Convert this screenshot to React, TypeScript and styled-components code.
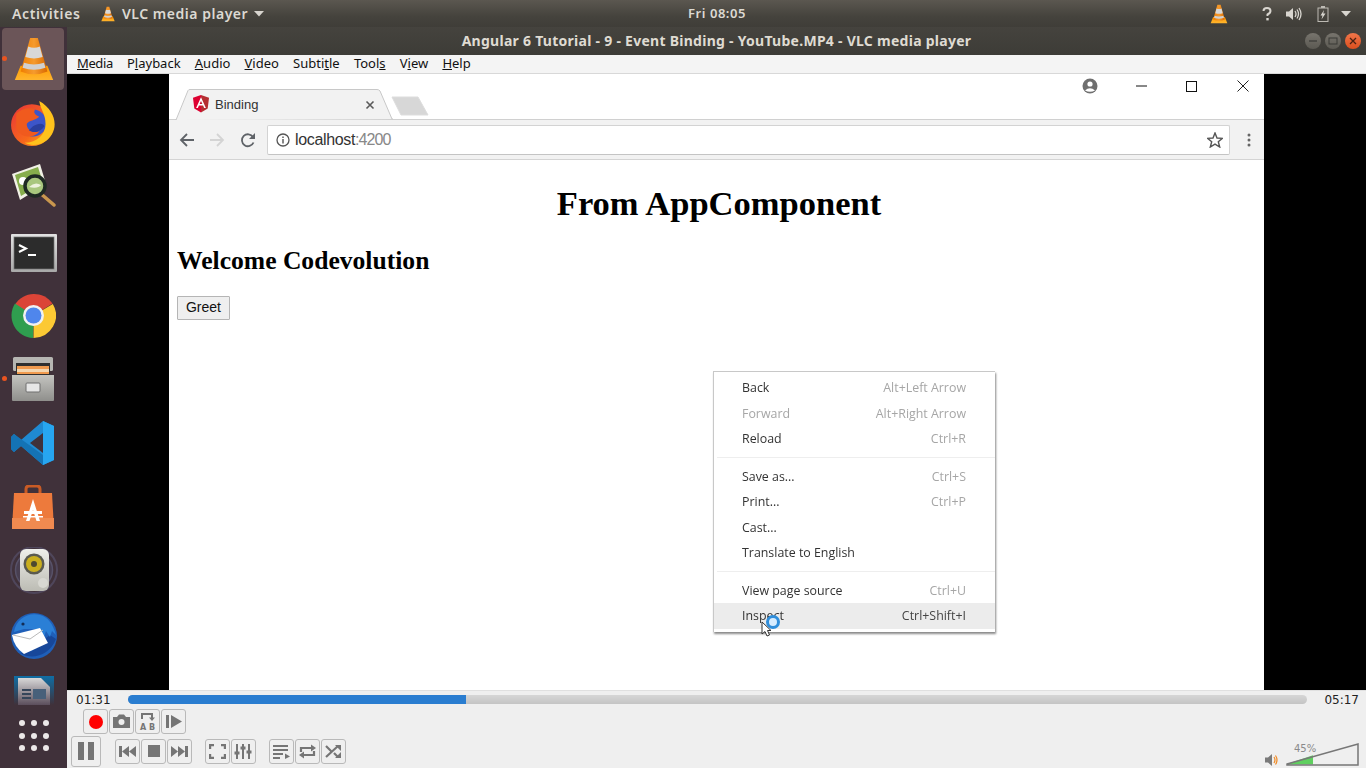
import React from "react";
import styled, { createGlobalStyle } from "styled-components";

const Global = createGlobalStyle`
  html, body { margin: 0; padding: 0; background: #000; }
  body { width: 1366px; height: 768px; overflow: hidden; }
`;

const Screen = styled.div`
  width: 1366px; height: 768px; display: flex; flex-direction: column; overflow: hidden;
  font-family: "Noto Sans", sans-serif;
`;
const TopBar = styled.header`
  height: 27px; flex: none; display: flex; align-items: center; position: relative;
  background: linear-gradient(#5b5750, #45433d 60%, #3f3d38);
  color: #dcd9d2; font-size: 14px; font-weight: 600; letter-spacing: .6px;
`;
const Activities = styled.span` margin-left: 12px; width: 88px; `;
const AppMenu = styled.span` display: flex; align-items: center; gap: 6px; letter-spacing: .52px; `;
const Clock = styled.span`
  position: absolute; left: 688px; top: 4px; font-size: 13px; line-height: 18px; letter-spacing: .55px;
`;
const Tray = styled.div` margin-left: auto; display: flex; align-items: center; padding-right: 15px; `;
const Body = styled.div` flex: 1; display: flex; min-height: 0; `;
const Dock = styled.nav`
  width: 67px; flex: none; display: flex; flex-direction: column; overflow: hidden;
  background: #40313a;
`;
const DockItem = styled.div<{ $active?: boolean; $running?: boolean; $clip?: boolean }>`
  height: ${p => (p.$clip ? 38 : 64)}px; flex: none; display: flex; justify-content: center; position: relative; overflow: hidden;
  align-items: ${p => (p.$clip ? "flex-end" : "center")};
  &::before {
    content: ""; position: absolute; left: 2px; top: 1px; width: 62px; height: 62px; border-radius: 4px;
    background: ${p => (p.$active ? "#6b5558" : "transparent")};
  }
  &::after {
    content: ""; position: absolute; left: 2px; top: 29px; width: 5px; height: 5px; border-radius: 50%;
    background: ${p => (p.$running ? "#e95420" : "transparent")};
  }
  svg { position: relative; }
`;
const AppsItem = styled.div`
  flex: none; height: 63px; padding-top: 15px; box-sizing: border-box; align-content: start;
  display: grid; grid-template-columns: repeat(3, 6px); gap: 6.5px 6px; justify-content: center;
`;
const Dot = styled.i` width: 6px; height: 6px; border-radius: 50%; background: #ece8e8; `;
const Window = styled.main` flex: 1; display: flex; flex-direction: column; min-width: 0; `;
const TitleBar = styled.div`
  height: 28px; flex: none; display: flex; align-items: center; justify-content: center; position: relative; box-sizing: border-box;
  background: linear-gradient(#45433e, #3d3c37);
  color: #dfdbd2; font-size: 14px; font-weight: 700; letter-spacing: .27px; padding-bottom: 2px;
`;
const TitleButtons = styled.div` position: absolute; right: 5px; top: 6px; display: flex; gap: 4px; `;
const RoundBtn = styled.span<{ $close?: boolean }>`
  width: 16px; height: 16px; border-radius: 50%; display: flex; align-items: center; justify-content: center;
  background: ${p => (p.$close ? "linear-gradient(#f0764a,#dc4f1e)" : "linear-gradient(#77746d,#5b5952)")};
`;
const MenuBar = styled.div`
  height: 19px; flex: none; display: flex; box-sizing: border-box; background: #f4f4f4;
  border-bottom: 1px solid #d8d8d8; padding-left: 10px; gap: 14.2px; color: #111; font-size: 13px; line-height: 17px;
`;
const MenuItem = styled.span`
  u { text-underline-offset: 1px; text-decoration-thickness: 1px; }
  &:first-child { letter-spacing: -.4px; }
`;
const Video = styled.section` flex: 1; min-height: 0; background: #000; display: flex; justify-content: center; `;
const Browser = styled.div` width: 1095px; background: #fff; display: flex; flex-direction: column; position: relative; `;
const TabStrip = styled.div` height: 46px; flex: none; display: flex; align-items: flex-end; padding-left: 6px; box-sizing: border-box; `;
const Tab = styled.div`
  width: 218px; height: 31px; position: relative; display: flex; align-items: center; gap: 6px; padding: 0 0 0 18px;
  box-sizing: border-box; font-size: 13px; color: #333; font-family: "Liberation Sans", sans-serif;
  > svg:first-child { position: absolute; left: 0; top: 0; }
  > span, > svg:not(:first-child) { position: relative; }
`;
const TabClose = styled.span` margin-left: 101px; display: flex; `;
const WinControls = styled.div`
  margin-left: auto; align-self: flex-start; display: flex; align-items: center; height: 24px; padding-right: 15px;
`;
const WinGap = styled.span<{ $w: number }>` display: flex; margin-left: ${p => p.$w}px; `;
const Toolbar = styled.div`
  flex: none; display: flex; align-items: center; background: #f2f2f2; box-sizing: border-box;
  border-top: 1px solid #d0d0d0; border-bottom: 1px solid #d4d4d4; padding-left: 10px; margin-top: -1px; height: 41px;
`;
const NavIcon = styled.span<{ $w: number }>` width: ${p => p.$w}px; display: flex; `;
const Omnibox = styled.div`
  width: 963px; height: 30px; box-sizing: border-box; background: #fff; border: 1px solid #d3d3d3; border-bottom-color: #c4c4c4; border-radius: 2px;
  display: flex; align-items: center; padding: 0 6px 0 8px; font-family: "Liberation Sans", sans-serif; font-size: 16px; color: #333; gap: 5px;
`;
const Host = styled.span` flex: 1; letter-spacing: -.35px; em { font-style: normal; color: #888; letter-spacing: -.9px; } `;
const KebabWrap = styled.span` margin-left: 13px; display: flex; `;
const Page = styled.div` flex: 1; padding: 21px 8px 0; font-family: "Liberation Serif", serif; color: #000; `;
const H1 = styled.h1` margin: 0; font-size: 34.5px; line-height: 44px; text-align: center; padding-left: 5px; `;
const H2 = styled.h2` margin: 21px 0 0; font-size: 25.6px; line-height: 30px; `;
const Greet = styled.button`
  display: block; margin-top: 20px; width: 53px; height: 24px; padding: 0 0 2px; font: 14px "Liberation Sans", sans-serif; color: #111;
  background: #efefef; border: 1px solid #b5b5b5; border-radius: 1px;
`;
const ContextMenu = styled.div`
  position: absolute; left: 544px; top: 297px; width: 282px; height: 261px; box-sizing: border-box; background: #fff;
  padding: 3px 0; border: 1px solid #c8c8c8; border-width: 1px 0 0 1px; box-shadow: 1px 2px 2px #8a8a8a;
  font-family: "Open Sans", sans-serif; font-size: 12.4px; color: #333;
`;
const CtxRow = styled.div<{ $hot?: boolean; $dim?: boolean }>`
  height: 25.5px; display: flex; align-items: center; justify-content: space-between; padding: 0 29px 0 28px;
  background: ${p => (p.$hot ? "#ececec" : "transparent")}; color: ${p => (p.$dim ? "#a6a6a6" : "#333")};
  filter: blur(.25px);
  kbd { font: inherit; color: ${p => (p.$hot ? "#444" : "#a6a6a6")}; }
`;
const CtxSep = styled.div` height: 12px; display: flex; align-items: center; &::after { content: ""; flex: 1; height: 1px; background: #eeeeee; margin-left: 3px; } `;
const PointerWrap = styled.div` position: absolute; left: 591px; top: 540px; `;
const Controls = styled.footer`
  height: 78px; flex: none; background: #efefef; position: relative; border-top: 1px solid #e0e0e0; box-sizing: border-box;
  display: flex; flex-direction: column; color: #111;
`;
const Seek = styled.div`
  height: 17px; flex: none; display: flex; align-items: center; font-family: "DejaVu Sans", sans-serif; font-size: 12px; padding: 0 7px 0 9px; color: #222;
`;
const SeekTrack = styled.div` flex: 1; margin: 0 17px; height: 9px; border-radius: 5px; background: linear-gradient(#d6d6d6, #c4c4c4); overflow: hidden; display: flex; `;
const SeekFill = styled.div` background: #2a7dd0; `;
const Row1 = styled.div` height: 27px; flex: none; display: flex; padding-left: 16px; margin-top: 1px; gap: 1px; `;
const Row2 = styled.div` flex: 1; display: flex; align-items: center; padding-left: 4px; position: relative; margin-top: -1px; padding-bottom: 1px; `;
const Btn = styled.span<{ $w?: number; $h?: number }>`
  width: ${p => p.$w ?? 25}px; height: ${p => p.$h ?? 25}px; flex: none; box-sizing: border-box; border: 1px solid #b9b9b9; border-radius: 3px;
  display: flex; align-items: center; justify-content: center; background: #efefef;
`;
const BtnGroup = styled.div<{ $ml: number }>` display: flex; gap: 1px; margin-left: ${p => p.$ml}px; `;
const Volume = styled.div` margin-left: auto; margin-right: 7px; display: flex; align-items: flex-end; gap: 8px; padding-top: 6px; `;
const VolMeter = styled.div` position: relative; width: 73px; height: 23px; `;
const VolText = styled.span`
  position: absolute; left: 8px; top: 0; font: 10px "DejaVu Sans", sans-serif; color: #8a8a8a;
`;

const Cone = ({ s = 48 }: { s?: number }) => (
  <svg width={s} height={s} viewBox="0 0 48 48">
    <defs>
      <linearGradient id={`c${s}`} x1="0" x2="1" y1="0" y2="0"><stop offset="0" stopColor="#ef7d00" /><stop offset=".5" stopColor="#f59b2e" /><stop offset="1" stopColor="#d96800" /></linearGradient>
      <linearGradient id={`b${s}`} x1="0" x2="0" y1="0" y2="1"><stop offset="0" stopColor="#ff9a00" /><stop offset="1" stopColor="#ffb52e" /></linearGradient>
    </defs>
    <path d="M4 46 L10 31 H38 L44 46 Z" fill={`url(#b${s})`} />
    <path d="M20 2 H28 L38 37 Q24 43 10 37 Z" fill={`url(#c${s})`} />
    <path d="M18 11 Q24 13.5 30 11 L33 22 Q24 25 15 22 Z" fill="#d8d8d8" />
    <path d="M13.6 28 Q24 31.5 34.4 28 L36 33 Q24 37.5 12 33 Z" fill="#d0d0d0" />
  </svg>
);
const Firefox = () => (
  <svg width="46" height="46" viewBox="2 1 44 44" style={{ marginTop: -1, marginLeft: -1 }}>
    <defs><linearGradient id="ffx" x1="0" x2="1" y1="0" y2="1"><stop offset="0" stopColor="#e8333a" /><stop offset=".6" stopColor="#f7681c" /><stop offset="1" stopColor="#ffb81c" /></linearGradient></defs>
    <circle cx="23" cy="25" r="20" fill="url(#ffx)" />
    <circle cx="24" cy="23" r="13" fill="#3c55c9" />
    <path d="M30 2 C44 10 48 24 42 34 C36 44 24 46 16 42 C28 42 36 34 36 24 C36 14 31 10 30 2 Z" fill="#ffc21c" />
    <path d="M8 14 C14 8 22 8 26 10 C24 13 26 15 30 17 C26 21 20 20 18 24 C18 30 24 33 30 31 C26 38 12 38 8 28 Z" fill="#f05a1e" />
    <path d="M20 30 C26 34 32 30 35 26 C33 22 28 24 24 26 Z" fill="#2a3f9f" />
  </svg>
);
const Viewer = () => (
  <svg width="46" height="46" viewBox="0 0 46 46" style={{ marginLeft: -1 }}>
    <path d="M2 10 L30 0 L36 20 L10 36 Z" fill="#f1f1e6" />
    <path d="M5 11 L28 3 L33 19 L11 32 Z" fill="#86ad4c" />
    <circle cx="13" cy="17" r="4" fill="#fff" />
    <path d="M30 29 L44 41" stroke="#c9974e" strokeWidth="3.5" strokeLinecap="round" />
    <circle cx="25" cy="22" r="10" fill="#a9c77e" stroke="#1f2a24" strokeWidth="3.5" />
    <path d="M19 23 q6-6 12 -2 q-3 4 -12 2" fill="#eef2dd" />
  </svg>
);
const Terminal = () => (
  <svg width="46" height="38" viewBox="0 0 46 38" style={{ marginTop: 4 }}>
    <defs><linearGradient id="tb" x1="0" x2="0" y1="0" y2="1"><stop offset="0" stopColor="#e2e2e2" /><stop offset="1" stopColor="#a8a8a8" /></linearGradient></defs>
    <rect width="46" height="38" rx="1" fill="url(#tb)" />
    <rect x="3" y="3" width="40" height="32" fill="#2c2c2c" stroke="#777" strokeWidth=".7" />
    <path d="M8 11 L15 14.5 L8 18" stroke="#fff" strokeWidth="2" fill="none" />
    <path d="M17 21 H25" stroke="#fff" strokeWidth="2" />
  </svg>
);
const Chrome = () => (
  <svg width="45" height="45" viewBox="0 0 45 45" style={{ marginLeft: -1 }}>
    <path d="M22.5 22.5 L4 11.5 A22.5 22.5 0 0 1 41.5 10.5 Z" fill="#db4437" />
    <path d="M22.5 22.5 L41.8 11 A22.5 22.5 0 0 1 22.5 45 Z" fill="#fcc934" />
    <path d="M22.5 22.5 L22 45 A22.5 22.5 0 0 1 4 10.5 Z" fill="#2f9e4f" />
    <circle cx="22.5" cy="22.5" r="10.5" fill="#f1f1f1" />
    <circle cx="22.5" cy="22.5" r="8" fill="#4f86ec" />
  </svg>
);
const Files = () => (
  <svg width="42" height="44" viewBox="0 0 42 44" style={{ marginLeft: -1 }}>
    <defs><linearGradient id="fg" x1="0" x2="0" y1="0" y2="1"><stop offset="0" stopColor="#c4c4c0" /><stop offset="1" stopColor="#8f8f8c" /></linearGradient></defs>
    <rect x="1" y="0" width="40" height="14" rx="1.5" fill="#b6b6b2" />
    <rect x="4" y="6" width="34" height="14" fill="#2f2f2f" />
    <rect x="5" y="9" width="32" height="8" fill="#f09a4e" />
    <rect x="5" y="12" width="32" height="3" fill="#f3d6b0" />
    <path d="M0 18 H42 V43 Q42 44 41 44 H1 Q0 44 0 43 Z" fill="url(#fg)" />
    <rect x="14" y="26" width="14" height="9" rx="1" fill="#e6e6e6" stroke="#6e6e6e" />
  </svg>
);
const VSCode = () => (
  <svg width="44" height="44" viewBox="0 0 44 44" style={{ marginLeft: -1 }}>
    <path d="M32 0 L43 5 V39 L32 44 L10 25 L3 31 L0 28 V16 L3 13 L10 19 Z" fill="#1f8ad2" />
    <path d="M32 0 L43 5 V39 L32 44 Z" fill="#27a6f0" />
    <path d="M32 12 L19 22 L32 32 Z" fill="#40313a" />
    <path d="M0 16 L3 13 L32 34 V44 L10 25 L3 31 L0 28 Z" fill="#1473b5" />
  </svg>
);
const Store = () => (
  <svg width="42" height="44" viewBox="0 0 42 44" style={{ marginLeft: -1 }}>
    <path d="M14 10 V4 Q14 1 17 1 H25 Q28 1 28 4 V10" stroke="#c95b25" strokeWidth="3" fill="none" />
    <path d="M2 8 H40 L42 44 H0 Z" fill="#ed7a3c" />
    <rect y="33" width="42" height="11" fill="#f08a50" />
    <path d="M21 14 L28 36 H24.5 L21 25 L17.5 36 H14 Z" fill="#fff" />
    <rect x="12" y="26" width="18" height="3" fill="#fff" />
    <rect x="11" y="31" width="20" height="1.5" fill="#fff" />
  </svg>
);
const Speaker = () => (
  <svg width="48" height="48" viewBox="0 0 48 48">
    <defs><linearGradient id="sf" x1="0" x2="0" y1="0" y2="1"><stop offset="0" stopColor="#eeeeea" /><stop offset="1" stopColor="#bcbcb4" /></linearGradient></defs>
    <circle cx="24" cy="23" r="23" fill="none" stroke="#55506a" strokeWidth="2" opacity=".7" />
    <circle cx="24" cy="23" r="18.5" fill="#4a4256" stroke="#5d5a74" strokeWidth="1.5" opacity=".8" />
    <rect x="10" y="2" width="29" height="42" rx="6" fill="url(#sf)" />
    <circle cx="24" cy="17" r="10.5" fill="#5a5a50" />
    <circle cx="24" cy="17" r="8" fill="#c9ae1e" />
    <circle cx="24" cy="17" r="3" fill="#4d4a30" />
    <circle cx="33" cy="36" r="5" fill="#d8d8d2" />
  </svg>
);
const Bird = () => (
  <svg width="48" height="48" viewBox="0 0 48 48">
    <circle cx="24" cy="25" r="23" fill="#1f5fb8" />
    <path d="M10 42 C22 50 40 44 46 28 L40 24 L32 30 L22 40 Z" fill="#17479a" />
    <path d="M4 21 C6 8 18 1 30 4 C38 6 43 13 46 24 L42 20 L40 26 L36 20 L34 26 L28 18 L14 18 Z" fill="#2a7fd6" />
    <path d="M2 24 L30 17 L38 32 L14 43 Q4 36 2 24 Z" fill="#fff" />
    <path d="M3 24 L20 28 L33 19" stroke="#b9b9b9" fill="none" />
    <circle cx="13" cy="13" r="1.6" fill="#122c55" />
  </svg>
);
const Writer = () => (
  <svg width="40" height="30" viewBox="0 0 40 30">
    <defs><linearGradient id="wf" x1="0" x2="0" y1="0" y2="1"><stop offset="0" stopColor="#d8d8d8" /><stop offset="1" stopColor="#5b4e5c" /></linearGradient>
      <linearGradient id="wb" x1="0" x2="0" y1="0" y2="1"><stop offset="0" stopColor="#0f6ea5" /><stop offset="1" stopColor="#40313a" /></linearGradient></defs>
    <path d="M0 1 H40 V30 H0 Z" fill="url(#wb)" />
    <path d="M4 3 H27 L36 12 V30 H4 Z" fill="url(#wf)" />
    <path d="M8 15 H17 M8 19 H17 M8 23 H17" stroke="#35455a" strokeWidth="2" />
    <rect x="19" y="14" width="13" height="10" fill="#48607a" />
  </svg>
);

const Caret = ({ c = "#d8d5cf" }: { c?: string }) => (
  <svg width="10" height="6" viewBox="0 0 10 6"><path d="M0 0 H10 L5 5.5 Z" fill={c} /></svg>
);

const AngularLogo = () => (
  <svg width="16" height="18" viewBox="0 0 16 18" style={{ marginTop: -1 }}>
    <path d="M8 0 L16 2.8 L14.7 13.6 L8 17.5 Z" fill="#b52e31" />
    <path d="M8 0 L0 2.8 L1.3 13.6 L8 17.5 Z" fill="#dd0031" />
    <path d="M8 2.2 L3.1 13 H4.9 L5.9 10.6 H10.1 L11.1 13 H12.9 Z M8 6 L9.4 9.1 H6.6 Z" fill="#fff" fillRule="evenodd" />
  </svg>
);

const G = "#757575";
const Ic = ({ children, w = 19, h = 17 }: { children: React.ReactNode; w?: number; h?: number }) => (
  <svg width={w} height={h} viewBox={`0 0 ${w} ${h}`}>{children}</svg>
);

export default function App() {
  return (
    <Screen>
      <Global />
      <TopBar>
        <Activities>Activities</Activities>
        <AppMenu><Cone s={16} />VLC media player <Caret /></AppMenu>
        <Clock>Fri 08:05</Clock>
        <Tray>
          <Cone s={20} />
          <svg width="10" height="14" viewBox="0 0 10 14" style={{ marginLeft: 33 }}>
            <path d="M1.5 4 Q1.5 1 5 1 Q8.5 1 8.5 4 Q8.5 6 5.5 7.5 V9" stroke="#d8d5cf" strokeWidth="2" fill="none" /><rect x="4.3" y="11" width="2.4" height="2.4" fill="#d8d5cf" />
          </svg>
          <svg width="16" height="14" viewBox="0 0 16 14" style={{ marginLeft: 14 }}>
            <path d="M0 4.5 H3 L7 1 V13 L3 9.5 H0 Z" fill="#d8d5cf" />
            <path d="M9 4 Q11 7 9 10 M11 2.5 Q14 7 11 11.5 M13 1 Q17 7 13 13" stroke="#d8d5cf" strokeWidth="1.3" fill="none" />
          </svg>
          <svg width="12" height="16" viewBox="0 0 12 16" style={{ marginLeft: 15 }}>
            <path d="M4 0 H8 V1.5 H11.5 V16 H.5 V1.5 H4 Z M1.5 2.5 V15 H10.5 V2.5 Z" fill="#bdbab3" fillRule="evenodd" />
            <path d="M7 4 L3.5 9.5 H5.5 L4.5 13.5 L8.5 7.5 H6.3 Z" fill="#d8d5cf" />
          </svg>
          <span style={{ display: "flex", marginLeft: 12 }}><Caret /></span>
        </Tray>
      </TopBar>
      <Body>
        <Dock>
          <DockItem $active $running><Cone s={46} /></DockItem>
          <DockItem><Firefox /></DockItem>
          <DockItem><Viewer /></DockItem>
          <DockItem><Terminal /></DockItem>
          <DockItem><Chrome /></DockItem>
          <DockItem $running><Files /></DockItem>
          <DockItem><VSCode /></DockItem>
          <DockItem><Store /></DockItem>
          <DockItem><Speaker /></DockItem>
          <DockItem><Bird /></DockItem>
          <DockItem $clip><Writer /></DockItem>
          <AppsItem>{Array.from({ length: 9 }, (_, i) => <Dot key={i} />)}</AppsItem>
        </Dock>
        <Window>
          <TitleBar>
            Angular 6 Tutorial - 9 - Event Binding - YouTube.MP4 - VLC media player
            <TitleButtons>
              <RoundBtn><svg width="10" height="10" viewBox="0 0 10 10"><path d="M1 5 H9" stroke="#3a3a36" strokeWidth="1.2" /></svg></RoundBtn>
              <RoundBtn><svg width="10" height="10" viewBox="0 0 10 10"><rect x="1" y="2" width="8" height="6" fill="none" stroke="#3a3a36" /></svg></RoundBtn>
              <RoundBtn $close><svg width="10" height="10" viewBox="0 0 10 10"><path d="M2 2 L8 8 M8 2 L2 8" stroke="#4a2112" strokeWidth="1.3" /></svg></RoundBtn>
            </TitleButtons>
          </TitleBar>
          <MenuBar>
            <MenuItem><u>M</u>edia</MenuItem>
            <MenuItem>P<u>l</u>ayback</MenuItem>
            <MenuItem><u>A</u>udio</MenuItem>
            <MenuItem><u>V</u>ideo</MenuItem>
            <MenuItem>Subti<u>t</u>le</MenuItem>
            <MenuItem>Tool<u>s</u></MenuItem>
            <MenuItem>V<u>i</u>ew</MenuItem>
            <MenuItem><u>H</u>elp</MenuItem>
          </MenuBar>
          <Video>
            <Browser>
              <TabStrip>
                <Tab>
                  <svg width="218" height="31" viewBox="0 0 218 31"><path d="M0 31 H1 L13 1.5 Q13.5 .5 15 .5 H202 Q204 .5 205 2 L217 30 H218" fill="#f2f2f2" stroke="#c8c8c8" /></svg>
                  <AngularLogo />
                  <span>Binding</span>
                  <TabClose><svg width="10" height="10" viewBox="0 0 10 10"><path d="M1.5 1.5 L8.5 8.5 M8.5 1.5 L1.5 8.5" stroke="#5a5a5a" strokeWidth="1.6" /></svg></TabClose>
                </Tab>
                <svg width="38" height="20" viewBox="0 0 38 20" style={{ marginBottom: 4, marginLeft: -2, flex: "none" }}><path d="M1 1 H27 L37 19 H10 Z" fill="#d7d7d7" stroke="#dddddd" /></svg>
                <WinControls>
                  <svg width="16" height="16" viewBox="0 0 16 16"><circle cx="8" cy="8" r="7.5" fill="#6f6f6f" /><circle cx="8" cy="6" r="2.6" fill="#fff" /><path d="M3 12.5 Q8 8 13 12.5 Q8 15 3 12.5Z" fill="#fff" /></svg>
                  <WinGap $w={38}><svg width="11" height="2" viewBox="0 0 11 2"><path d="M0 1 H11" stroke="#111" /></svg></WinGap>
                  <WinGap $w={39}><svg width="11" height="11" viewBox="0 0 11 11"><rect x=".5" y=".5" width="10" height="10" fill="none" stroke="#111" /></svg></WinGap>
                  <WinGap $w={40}><svg width="12" height="12" viewBox="0 0 12 12"><path d="M.5 .5 L11.5 11.5 M11.5 .5 L.5 11.5" stroke="#222" /></svg></WinGap>
                </WinControls>
              </TabStrip>
              <Toolbar>
                <NavIcon $w={30}><svg width="16" height="16" viewBox="0 0 16 16"><path d="M15 8 H2 M8 2 L2 8 L8 14" stroke="#5f6368" strokeWidth="1.8" fill="none" /></svg></NavIcon>
                <NavIcon $w={31}><svg width="16" height="16" viewBox="0 0 16 16"><path d="M1 8 H14 M8 2 L14 8 L8 14" stroke="#d4d4d4" strokeWidth="1.8" fill="none" /></svg></NavIcon>
                <NavIcon $w={27}><svg width="16" height="16" viewBox="0 0 16 16"><path d="M13.5 10.5 A6 6 0 1 1 13 5" stroke="#5f6368" strokeWidth="1.8" fill="none" /><path d="M15 1 V7 H9 Z" fill="#5f6368" /></svg></NavIcon>
                <Omnibox>
                  <svg width="14" height="14" viewBox="0 0 14 14" style={{ flex: "none" }}><circle cx="7" cy="7" r="6" fill="none" stroke="#555" strokeWidth="1.3" /><path d="M7 6 V10.5 M7 3.5 V5" stroke="#555" strokeWidth="1.4" /></svg>
                  <Host>localhost<em>:4200</em></Host>
                  <svg width="16" height="16" viewBox="0 0 16 16"><path d="M8 1 L10 6 L15.5 6.3 L11.3 9.8 L12.7 15 L8 12.1 L3.3 15 L4.7 9.8 L.5 6.3 L6 6 Z" fill="none" stroke="#555" strokeWidth="1.4" /></svg>
                </Omnibox>
                <KebabWrap><svg width="12" height="14" viewBox="0 0 12 14"><circle cx="6" cy="2" r="1.5" fill="#666" /><circle cx="6" cy="7" r="1.5" fill="#666" /><circle cx="6" cy="12" r="1.5" fill="#666" /></svg></KebabWrap>
              </Toolbar>
              <Page>
                <H1>From AppComponent</H1>
                <H2>Welcome Codevolution</H2>
                <Greet>Greet</Greet>
              </Page>
              <ContextMenu>
                <CtxRow><span>Back</span><kbd>Alt+Left Arrow</kbd></CtxRow>
                <CtxRow $dim><span>Forward</span><kbd>Alt+Right Arrow</kbd></CtxRow>
                <CtxRow><span>Reload</span><kbd>Ctrl+R</kbd></CtxRow>
                <CtxSep />
                <CtxRow><span>Save as...</span><kbd>Ctrl+S</kbd></CtxRow>
                <CtxRow><span>Print...</span><kbd>Ctrl+P</kbd></CtxRow>
                <CtxRow><span>Cast...</span></CtxRow>
                <CtxRow><span>Translate to English</span></CtxRow>
                <CtxSep />
                <CtxRow><span>View page source</span><kbd>Ctrl+U</kbd></CtxRow>
                <CtxRow $hot><span>Inspect</span><kbd>Ctrl+Shift+I</kbd></CtxRow>
              </ContextMenu>
              <PointerWrap>
                <svg width="24" height="26" viewBox="0 0 24 26">
                  <circle cx="13" cy="8" r="5.5" fill="#d6ecff" stroke="#2f8edb" strokeWidth="3" />
                  <path d="M2 8 V20 L5 17.5 L7 22 L9.5 21 L7.5 16.5 H11 Z" fill="#fff" stroke="#333" />
                </svg>
              </PointerWrap>
            </Browser>
          </Video>
          <Controls>
            <Seek>
              <span>01:31</span>
              <SeekTrack><SeekFill style={{ width: `${(338 / 1179) * 100}%` }} /></SeekTrack>
              <span>05:17</span>
            </Seek>
            <Row1>
              <Btn><svg width="16" height="16" viewBox="0 0 16 16"><circle cx="8" cy="8" r="7" fill="#f00" /></svg></Btn>
              <Btn><Ic><path d="M1 4 H5 L7 1.5 H12 L14 4 H18 V15 H1 Z" fill={G} /><circle cx="9.5" cy="9" r="3" fill="#efefef" /></Ic></Btn>
              <Btn><Ic h={19}><path d="M4 7 V2 H14 V6" stroke={G} strokeWidth="2" fill="none" /><path d="M11 5.5 H17 L14 9 Z" fill={G} /><text x="2" y="18" fontSize="8" fontWeight="700" fontFamily="DejaVu Sans" fill={G}>A</text><text x="11" y="18" fontSize="8" fontWeight="700" fontFamily="DejaVu Sans" fill={G}>B</text></Ic></Btn>
              <Btn><Ic><rect x="2" y="2" width="3" height="13" fill={G} /><path d="M7 2 L18 8.5 L7 15 Z" fill={G} /></Ic></Btn>
            </Row1>
            <Row2>
              <Btn $w={30} $h={31}><svg width="18" height="18" viewBox="0 0 18 18"><rect x="1" y="0" width="6" height="18" fill={G} /><rect x="11" y="0" width="6" height="18" fill={G} /></svg></Btn>
              <BtnGroup $ml={14}>
                <Btn><Ic h={13}><rect x="1" y="1" width="3" height="11" fill={G} /><path d="M11 1 V12 L4 6.5 Z M18 1 V12 L11 6.5 Z" fill={G} /></Ic></Btn>
                <Btn><svg width="12" height="12" viewBox="0 0 12 12"><rect width="12" height="12" fill={G} /></svg></Btn>
                <Btn><Ic h={13}><rect x="15" y="1" width="3" height="11" fill={G} /><path d="M1 1 V12 L8 6.5 Z M8 1 V12 L15 6.5 Z" fill={G} /></Ic></Btn>
              </BtnGroup>
              <BtnGroup $ml={13}>
                <Btn><svg width="17" height="15" viewBox="0 0 17 15"><path d="M1 5 V1 H5 M12 1 H16 V5 M16 10 V14 H12 M5 14 H1 V10" stroke={G} strokeWidth="2.4" fill="none" /></svg></Btn>
                <Btn><Ic><path d="M3 1 V16 M9 1 V16 M15 1 V16" stroke={G} strokeWidth="2" /><path d="M0.5 10 H5.5 M6.5 5 H11.5 M12.5 9 H17.5" stroke={G} strokeWidth="3" /></Ic></Btn>
              </BtnGroup>
              <BtnGroup $ml={13}>
                <Btn><Ic h={15}><path d="M1 2 H16 M1 6 H16 M1 10 H11 M1 14 H8" stroke={G} strokeWidth="2" /><path d="M13 9.5 L18 12.5 L13 15 Z" fill={G} /></Ic></Btn>
                <Btn><Ic h={15}><path d="M3 8 V4 H15" stroke={G} strokeWidth="2.2" fill="none" /><path d="M13 0.5 L18 4 L13 7.5 Z" fill={G} /><path d="M16 7 V11 H4" stroke={G} strokeWidth="2.2" fill="none" /><path d="M6 7.5 L1 11 L6 14.5 Z" fill={G} /></Ic></Btn>
                <Btn><Ic h={15}><path d="M2 2 L7 7 M10 9 L14 13 M2 13 L14 2" stroke={G} strokeWidth="2.2" fill="none" /><path d="M11 1 H17 V7 Z M11 14 H17 V8 Z" fill={G} /></Ic></Btn>
              </BtnGroup>
              <Volume>
                <svg width="14" height="14" viewBox="0 0 14 14" style={{ marginBottom: -1 }}>
                  <path d="M1 4.5 H4 L8 1 V13 L4 9.5 H1 Z" fill="#7a7a7a" />
                  <path d="M10 4 Q12 7 10 10 M11.5 2.5 Q14.5 7 11.5 11.5" stroke="#f08a24" strokeWidth="1.2" fill="none" />
                </svg>
                <VolMeter>
                  <svg width="73" height="23" viewBox="0 0 73 23" style={{ display: "block" }}>
                    <path d="M1 21 L27 12.2 V21.5 H1 Z" fill="#5fcf5f" />
                    <path d="M1 21 L72 1 V22 H1 Z" fill="none" stroke="#777" strokeWidth="1.5" />
                  </svg>
                  <VolText>45%</VolText>
                </VolMeter>
              </Volume>
            </Row2>
          </Controls>
        </Window>
      </Body>
    </Screen>
  );
}
